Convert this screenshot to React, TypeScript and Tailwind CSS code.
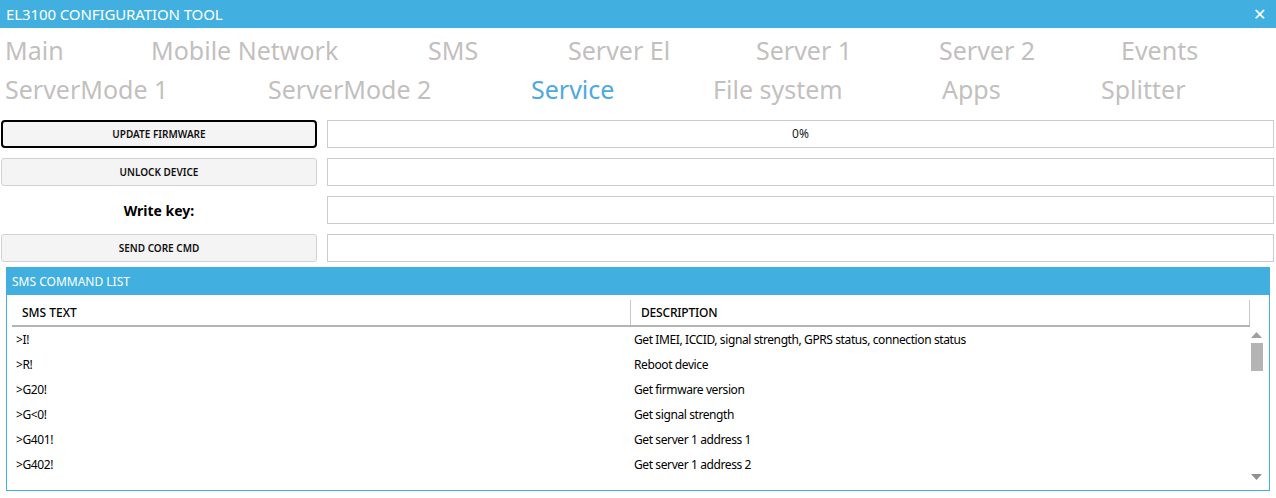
const font = "font-['Noto_Sans','Open_Sans',sans-serif]";

const tabsRow1: [string, number][] = [
  ["Main", 146],
  ["Mobile Network", 277],
  ["SMS", 140],
  ["Server El", 188],
  ["Server 1", 183],
  ["Server 2", 182],
  ["Events", 140],
];

const tabsRow2: [string, number][] = [
  ["ServerMode 1", 263],
  ["ServerMode 2", 263],
  ["Service", 182],
  ["File system", 229],
  ["Apps", 159],
  ["Splitter", 140],
];

const commands: [string, string][] = [
  [">I!", "Get IMEI, ICCID, signal strength, GPRS status, connection status"],
  [">R!", "Reboot device"],
  [">G20!", "Get firmware version"],
  [">G<0!", "Get signal strength"],
  [">G401!", "Get server 1 address 1"],
  [">G402!", "Get server 1 address 2"],
];

function TabRow({ tabs }: { tabs: [string, number][] }) {
  return (
    <div className="flex h-[39px] items-center pl-[5px]">
      {tabs.map(([name, w]) => (
        <div
          key={name}
          style={{ width: w }}
          className={`shrink-0 text-[25px] leading-none ${
            name === "Service" ? "text-[#4ea9de]" : "text-[#c3bfbf]"
          }`}>
          {name}
        </div>
      ))}
    </div>
  );
}

function ActionButton({ label, focused }: { label: string; focused?: boolean }) {
  return (
    <button
      className={`h-[28px] w-full bg-[#f4f4f4] text-[10px] font-semibold text-[#111] ${
        focused ? "rounded-[4px] border-2 border-black" : "rounded-[3px] border border-[#d2d2d2]"
      }`}>
      {label}
    </button>
  );
}

function Field({ value }: { value?: string }) {
  return (
    <div className="flex h-[28px] items-center justify-center border border-[#cccccc] bg-white text-[12px] text-[#222]">
      {value}
    </div>
  );
}

export default function App() {
  return (
    <div className={`h-[498px] w-[1276px] overflow-hidden bg-white ${font}`}>
      <div className="flex h-[28px] items-center justify-between bg-[#41b0e0] pl-[6px] pr-[10px] text-white">
        <span className="text-[15px] tracking-[-0.1px]">EL3100 CONFIGURATION TOOL</span>
        <span className="text-[16px] leading-none">✕</span>
      </div>

      <div className="pt-[3px]">
        <TabRow tabs={tabsRow1} />
        <TabRow tabs={tabsRow2} />
      </div>

      <div className="mt-[11px] grid grid-cols-[316px_1fr] gap-x-[10px] gap-y-[10px] pl-[1px] pr-[2px]">
        <ActionButton label="UPDATE FIRMWARE" focused />
        <Field value="0%" />
        <ActionButton label="UNLOCK DEVICE" />
        <Field />
        <div className="flex h-[28px] items-center justify-center text-[14px] font-bold text-black">Write key:</div>
        <Field />
        <ActionButton label="SEND CORE CMD" />
        <Field />
      </div>

      <div className="ml-[6px] mt-[5px] flex h-[224px] w-[1264px] flex-col border border-[#41b0e0]">
        <div className="flex h-[27px] shrink-0 items-center bg-[#41b0e0] pl-[5px] text-[12px] text-white">
          SMS COMMAND LIST
        </div>
        <div className="flex flex-1 flex-col pl-[5px] pt-[5px]">
          <div className="flex h-[25px] w-[1238px] text-[12px] font-medium text-black">
            <div className="flex w-[618px] items-center pl-[10px]">SMS TEXT</div>
            <div className="flex flex-1 items-center border-l border-r border-[#c8c8c8] pl-[10px] tracking-[-0.2px]">DESCRIPTION</div>
          </div>
          <div className="h-[2px] w-[1238px] bg-[#b4b4b4]" />
          <div className="flex flex-1">
            <div className="w-[1238px] text-[12px] tracking-[-0.4px] text-black">
              {commands.map(([cmd, desc]) => (
                <div key={cmd} className="flex h-[25px] items-center">
                  <div className="w-[622px] pl-[4px]">{cmd}</div>
                  <div>{desc}</div>
                </div>
              ))}
            </div>
            <div className="flex w-[13px] flex-col items-center pt-[5px] pb-[10px]">
              <svg width="11" height="6" viewBox="0 0 11 6">
                <path d="M0 6 L5.5 0 L11 6 Z" fill="#a0a0a0" />
              </svg>
              <div className="mt-[5px] h-[28px] w-[12px] bg-[#b4b4b4]" />
              <div className="flex-1" />
              <svg width="11" height="6" viewBox="0 0 11 6">
                <path d="M0 0 L11 0 L5.5 6 Z" fill="#909090" />
              </svg>
            </div>
          </div>
        </div>
      </div>
    </div>
  );
}
